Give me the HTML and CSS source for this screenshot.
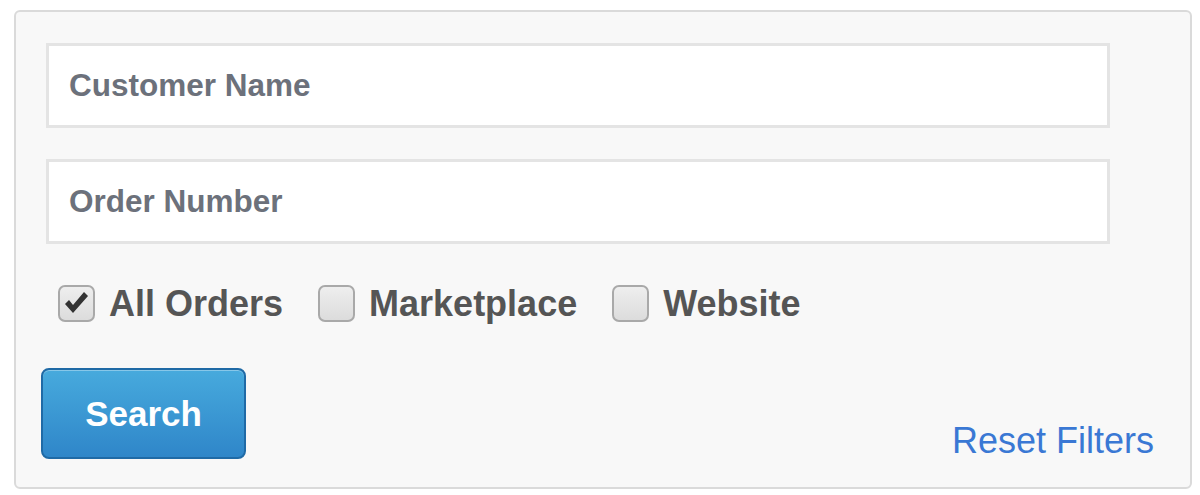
FILE: index.html
```html
<!DOCTYPE html>
<html lang="en">
<head>
  <meta charset="UTF-8">
  <title>Order Search</title>
  <link rel="stylesheet" href="styles.css">
</head>
<body>
  <div class="panel">
    <div class="fields">
      <input class="field" type="text" placeholder="Customer Name">
      <input class="field" type="text" placeholder="Order Number">
    </div>

    <div class="options">
      <label class="option">
        <span class="box">
          <svg width="26" height="24" viewBox="0 0 26 24"><path d="M2 13 L6 9 L10 14 L21 1 L25 5 L10 22 Z" fill="#333"/></svg>
        </span>
        All Orders
      </label>
      <label class="option">
        <span class="box"></span>
        Marketplace
      </label>
      <label class="option">
        <span class="box"></span>
        Website
      </label>
    </div>

    <div class="actions">
      <button class="search">Search</button>
      <a class="reset" href="#">Reset Filters</a>
    </div>
  </div>
</body>
</html>
```

FILE: styles.css
```css
body {
  margin: 0;
  background-color: #fff;
  font-family: "Liberation Sans", Arial, sans-serif;
}
.panel {
  width: 1108px;
  margin: 10px 0 0 14px;
  padding: 31px 36px 28px 30px;
  background-color: #f8f8f8;
  border: 2px solid #dadada;
  border-radius: 6px;
}
.fields {
  margin-right: 44px;
}
.field {
  display: block;
  box-sizing: border-box;
  width: 100%;
  height: 85px;
  margin: 0 0 31px;
  padding: 0 20px;
  border: 3px solid #e4e4e4;
  background: #fff;
  font-family: "Liberation Sans", Arial, sans-serif;
  font-size: 31.5px;
  font-weight: bold;
  color: #555;
  outline: none;
}
.field:last-child {
  margin-bottom: 0;
}
.field::placeholder {
  color: #6c717b;
}
.options {
  display: flex;
  align-items: center;
  height: 37px;
  margin: 41px 0 0 12px;
}
.option {
  display: flex;
  align-items: center;
  margin-right: 35px;
  font-size: 36px;
  font-weight: bold;
  color: #555;
}
.box {
  display: flex;
  align-items: center;
  justify-content: center;
  box-sizing: border-box;
  width: 37px;
  height: 37px;
  margin-right: 14px;
  border: 2px solid #a9a9a9;
  border-radius: 7px;
  background: linear-gradient(#eeeeee, #dcdcdc);
}
.box svg {
  margin: 0 2px 2px 0;
}
.actions {
  display: flex;
  justify-content: space-between;
  align-items: flex-end;
  margin: 46px 0 0 -5px;
}
.search {
  width: 205px;
  height: 91px;
  border: 2px solid #1f6aa6;
  border-radius: 8px;
  background: linear-gradient(#47aadd, #2f86c9);
  box-shadow: inset 0 1px 0 rgba(255,255,255,0.35);
  color: #fff;
  font-family: "Liberation Sans", Arial, sans-serif;
  font-size: 35px;
  font-weight: bold;
  cursor: pointer;
}
.reset {
  font-size: 36px;
  line-height: 1;
  color: #3a78d4;
  text-decoration: none;
}
```
